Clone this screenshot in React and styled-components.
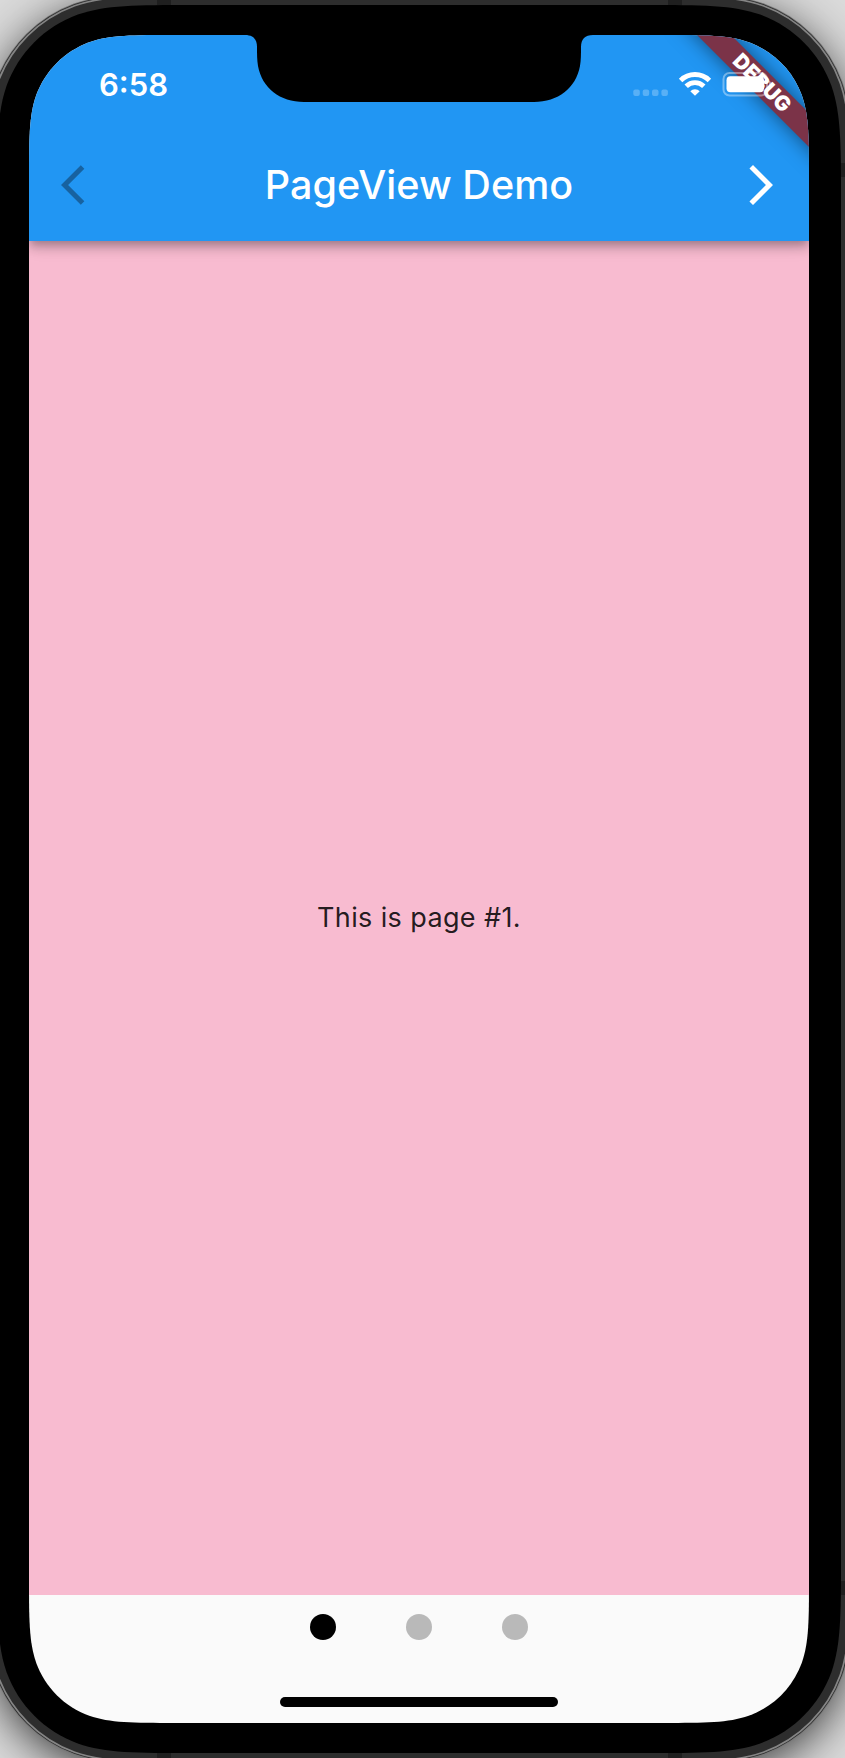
import React from "react";
import styled, { createGlobalStyle } from "styled-components";

const Global = createGlobalStyle`
  body { margin: 0; overflow: hidden; font-family: Inter, "Liberation Sans", sans-serif; }
  * { box-sizing: border-box; }
`;

// Rounded rectangle with continuous-curvature corners.
const squircle = (x, y, w, h, r) => {
  const a = 1.52866 * r, b = 1.08849 * r, c = 0.846 * r, d = 0.63149 * r;
  const e = 0.07491 * r, f = 0.37282 * r, g = 0.16906 * r;
  const R = x + w, B = y + h;
  return `M${x + a} ${y} L${R - a} ${y} C${R - b} ${y} ${R - c} ${y} ${R - d} ${y + e}
    C${R - f} ${y + g} ${R - g} ${y + f} ${R - e} ${y + d} C${R} ${y + c} ${R} ${y + b} ${R} ${y + a}
    L${R} ${B - a} C${R} ${B - b} ${R} ${B - c} ${R - e} ${B - d}
    C${R - g} ${B - f} ${R - f} ${B - g} ${R - d} ${B - e} C${R - c} ${B} ${R - b} ${B} ${R - a} ${B}
    L${x + a} ${B} C${x + b} ${B} ${x + c} ${B} ${x + d} ${B - e}
    C${x + f} ${B - g} ${x + g} ${B - f} ${x + e} ${B - d} C${x} ${B - c} ${x} ${B - b} ${x} ${B - a}
    L${x} ${y + a} C${x} ${y + b} ${x} ${y + c} ${x + e} ${y + d}
    C${x + g} ${y + f} ${x + f} ${y + g} ${x + d} ${y + e} C${x + c} ${y} ${x + b} ${y} ${x + a} ${y} Z`.replace(/\s+/g, " ");
};

const SCREEN = squircle(0, 0, 780, 1688, 95.5);
const BODY = squircle(-3, 5, 844, 1748, 128);

const Stage = styled.main`
  position: relative;
  width: 845px;
  height: 1758px;
  padding: 35px 36px 35px 29px;
  overflow: hidden;
  background: #dadada;
`;
const Casing = styled.svg`
  position: absolute;
  inset: 0;
`;
const Screen = styled.div`
  position: relative;
  display: flex;
  flex-direction: column;
  width: 780px;
  height: 1688px;
  background: #fafafa;
  clip-path: path("${SCREEN}");
`;
const Header = styled.header`
  position: relative;
  z-index: 1;
  height: 206px;
  background: #2196f3;
  box-shadow: 0 4px 8px -2px rgba(0,0,0,.2), 0 8px 10px rgba(0,0,0,.14), 0 2px 20px rgba(0,0,0,.12);
`;
const StatusBar = styled.div`
  display: flex;
  align-items: flex-start;
  justify-content: space-between;
  height: 94px;
  padding: 31px 37px 0 70px;
`;
const Time = styled.time`
  color: #fff;
  font-size: 31px;
  line-height: 38px;
  font-weight: 600;
`;
const Signals = styled.svg`
  display: block;
`;
const Notch = styled.svg`
  position: absolute;
  left: 216px;
  top: 0;
`;
const BatteryIcon = styled.svg`
  position: absolute;
  left: 693px;
  top: 36px;
`;
const Toolbar = styled.div`
  display: grid;
  grid-template-columns: 112px 1fr 112px;
  align-items: center;
  height: 112px;
`;
const Title = styled.h1`
  margin: 0;
  color: #fff;
  font-size: 39.5px;
  font-weight: 500;
  line-height: 48px;
  letter-spacing: 0.08px;
  text-align: center;
  white-space: nowrap;
`;
const NavButton = styled.button`
  display: flex;
  align-items: center;
  justify-content: center;
  justify-self: ${p => (p.$end ? "end" : "start")};
  width: ${p => (p.$end ? 96 : 112)}px;
  height: 96px;
  padding: 0;
  border: 0;
  background: none;
  color: ${p => (p.disabled ? "#1762a0" : "#fff")};
`;
const Ribbon = styled.div`
  position: absolute;
  left: 632px;
  top: 35.5px;
  width: 202px;
  height: 24px;
  background: #7b3348;
  box-shadow: 0 0 20px rgba(0,0,0,.5);
  color: #fff;
  font-size: 20.8px;
  font-weight: 900;
  line-height: 24px;
  text-align: center;
  transform: rotate(45deg);
`;
const Page = styled.section`
  display: flex;
  align-items: center;
  justify-content: center;
  height: 1354px;
  background: #f8bbd0;
  color: rgba(0,0,0,.87);
  font-size: 27px;
  line-height: 36px;
  letter-spacing: 0.38px;
`;
const Footer = styled.footer`
  display: flex;
  flex-direction: column;
  align-items: center;
  height: 128px;
`;
const Dots = styled.div`
  display: flex;
  gap: 69.5px;
  padding-top: 18.5px;
`;
const Dot = styled.span`
  width: 26.5px;
  height: 26.5px;
  border-radius: 50%;
  background: ${p => (p.$active ? "#000" : "#b9b9b9")};
`;
const HomeIndicator = styled.div`
  width: 278px;
  height: 10px;
  margin-top: 57px;
  border-radius: 5px;
  background: #000;
`;

const DeviceCasing = () => (
  <Casing width="845" height="1758" viewBox="0 0 845 1758">
    <defs>
      <filter id="soft" x="-10%" y="-10%" width="120%" height="120%"><feGaussianBlur stdDeviation="24" /></filter>
    </defs>
    <path d={BODY} transform="translate(0 10)" stroke="#000" strokeWidth="16" opacity=".8" filter="url(#soft)" />
    <path d={BODY} fill="none" stroke="#777" strokeWidth="23.5" />
    <path d={BODY} fill="none" stroke="#2b2b2b" strokeWidth="22" />
    <path d={BODY} fill="none" stroke="#858585" strokeWidth="20.5" />
    <path d={BODY} fill="#000" stroke="#2d2d2d" strokeWidth="17" />
    <path d={BODY} fill="#000" />
    <path d="M157 0h14v5h-14zM668 0h14v5h-14zM157 1753h14v5h-14zM668 1753h14v5h-14zM841 163h4v14h-4zM841 1581h4v14h-4z" fill="#1f1f1f" />
  </Casing>
);

const Battery = () => (
  <BatteryIcon width="50" height="27" viewBox="722 71 50 27">
    <rect x="723.5" y="73" width="43.5" height="22.5" rx="6" fill="none" stroke="#fff" strokeOpacity=".38" strokeWidth="2" />
    <rect x="726.5" y="76.3" width="37.5" height="16" rx="4" fill="#fff" />
    <path d="M769 80.5q3 1.500 3 3.700t-3 3.700z" fill="#fff" fillOpacity=".4" />
  </BatteryIcon>
);

export default function App() {
  return (
    <>
      <Global />
      <Stage>
        <DeviceCasing />
        <Screen>
          <Header>
            <StatusBar>
              <Time>6:58</Time>
              <Signals width="140" height="36" viewBox="632 66 140 36">
                <g fill="#fff" fillOpacity=".25">
                  <rect x="633.3" y="89.5" width="6.5" height="6.5" rx="2" />
                  <rect x="642.7" y="89.5" width="6.5" height="6.5" rx="2" />
                  <rect x="652" y="89.5" width="6.5" height="6.5" rx="2" />
                  <rect x="661.4" y="89.5" width="6.5" height="6.5" rx="2" />
                </g>
                <g fill="none" stroke="#fff" strokeWidth="4.9">
                  <path d="M680.6 80.4a20.6 20.6 0 0 1 28.800 0" />
                  <path d="M686.2 86.200a12.7 12.7 0 0 1 17.600 0" />
                </g>
                <path d="M695 95.8l-4.700-4.600a6.600 6.600 0 0 1 9.400 0z" fill="#fff" />
              </Signals>
            </StatusBar>
            <Toolbar>
              <NavButton disabled aria-label="Previous page">
                <svg width="48" height="48" viewBox="0 0 24 24" fill="currentColor"><path d="M11.67 3.87L9.9 2.1 0 12l9.9 9.9 1.77-1.77L3.54 12z" /></svg>
              </NavButton>
              <Title>PageView Demo</Title>
              <NavButton $end aria-label="Next page">
                <svg width="48" height="48" viewBox="0 0 24 24" fill="currentColor"><path d="M6.23 20.23L8 22l10-10L8 2 6.23 3.77 14.46 12z" /></svg>
              </NavButton>
            </Toolbar>
            <Notch width="348" height="68" viewBox="245 35 348 68">
              <path d="M245 35C253 35 257 39 257 47C257 54 257 60 258 66C262 88 280 102 304 102H534C558 102 576 88 580 66C581 60 581 54 581 47C581 39 585 35 593 35Z" />
            </Notch>
            <Ribbon>DEBUG</Ribbon>
            <Battery />
          </Header>
          <Page>This is page #1.</Page>
          <Footer>
            <Dots><Dot $active /><Dot /><Dot /></Dots>
            <HomeIndicator />
          </Footer>
        </Screen>
      </Stage>
    </>
  );
}
